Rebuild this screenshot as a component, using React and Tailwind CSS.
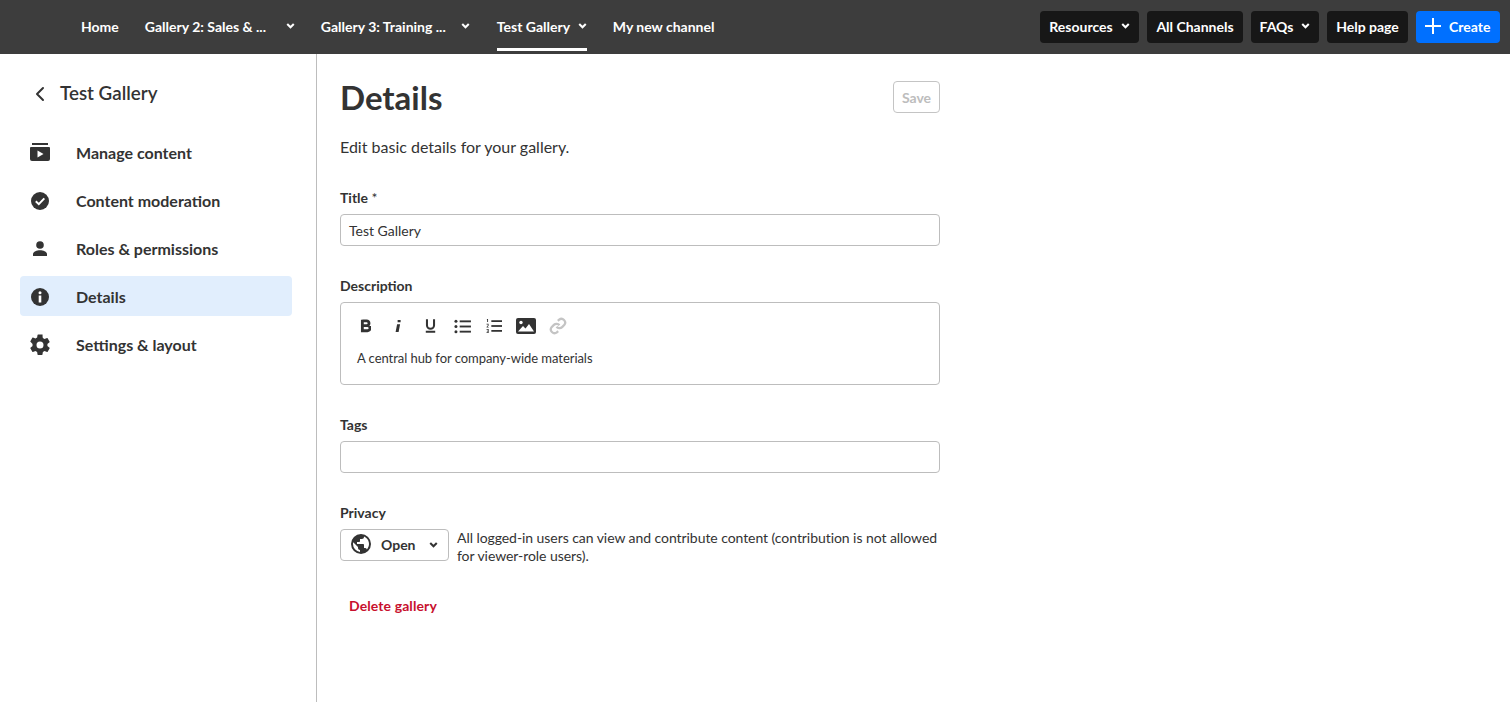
import React from 'react';
import { ChevronLeft } from 'lucide-react';

const Caret = ({ className = '' }) => (
  <svg viewBox="0 0 10 7" className={`w-[9px] h-[6px] ${className}`} fill="none" stroke="currentColor" strokeWidth="2.400">
    <path d="M1.200 1.200 5 5 8.800 1.200" />
  </svg>
);

const ContentIcon = () => (
  <svg viewBox="0 0 20 20" className="w-5 h-5" fill="#333">
    <rect x="2" y="0" width="16" height="2" />
    <path d="M1 4h18a1 1 0 0 1 1 1v11a2 2 0 0 1-2 2H2a2 2 0 0 1-2-2V5a1 1 0 0 1 1-1Z" />
    <path d="M7.500 7.500v7l6-3.500Z" fill="#fff" />
  </svg>
);
const CheckIcon = () => (
  <svg viewBox="0 0 20 20" className="w-5 h-5">
    <circle cx="10" cy="10" r="9" fill="#333" />
    <path d="M5.800 10.300 8.800 13.200 14.300 7.400" fill="none" stroke="#fff" strokeWidth="2" />
  </svg>
);
const PersonIcon = () => (
  <svg viewBox="0 0 20 20" className="w-5 h-5" fill="#333">
    <circle cx="10" cy="6" r="3.800" />
    <path d="M3 17v-2c0-2.400 4-3.800 7-3.800s7 1.400 7 3.800v2Z" />
  </svg>
);
const InfoIcon = () => (
  <svg viewBox="0 0 20 20" className="w-5 h-5">
    <circle cx="10" cy="10" r="9" fill="#333" />
    <circle cx="10" cy="5.800" r="1.500" fill="#fff" />
    <rect x="8.700" y="8.500" width="2.600" height="7" fill="#fff" />
  </svg>
);
const GearIcon = () => (
  <svg viewBox="0 0 24 24" className="w-6 h-6 shrink-0 -mx-[2px]" fill="#333">
    <path d="M19.400 13c.04-.33.06-.66.06-1s-.02-.67-.06-1l2.100-1.650a.5.500 0 0 0 .12-.64l-2-3.460a.5.500 0 0 0-.61-.22l-2.490 1a7.300 7.300 0 0 0-1.690-.98l-.38-2.650A.49.490 0 0 0 14 1.500h-4a.49.490 0 0 0-.49.420l-.38 2.650c-.61.250-1.170.590-1.690.98l-2.490-1a.5.500 0 0 0-.61.220l-2 3.460a.49.490 0 0 0 .12.640L4.560 11c-.04.330-.06.670-.06 1s.02.670.06 1l-2.100 1.650a.5.500 0 0 0-.12.640l2 3.460c.12.220.39.300.61.220l2.490-1c.52.400 1.080.730 1.690.980l.38 2.650c.03.240.24.420.49.420h4c.25 0 .46-.18.49-.42l.38-2.650c.61-.25 1.170-.59 1.690-.98l2.490 1c.23.090.49 0 .61-.22l2-3.460a.5.500 0 0 0-.12-.64ZM12 15.500a3.500 3.500 0 1 1 0-7 3.500 3.500 0 0 1 0 7Z" />
  </svg>
);

const GlobeIcon = () => (
  <svg viewBox="0 0 24 24" className="w-6 h-6 shrink-0" fill="#333">
    <path d="M12 2a10 10 0 1 0 0 20 10 10 0 0 0 0-20Zm-1 17.930A8 8 0 0 1 4 12c0-.62.08-1.210.21-1.790L9 15v1c0 1.100.9 2 2 2Zm6.900-2.540A2 2 0 0 0 16 16h-1v-3c0-.55-.45-1-1-1H8v-2h2c.55 0 1-.45 1-1V7h2c1.100 0 2-.9 2-2v-.41a8 8 0 0 1 2.900 12.800Z" />
  </svg>
);

const sideItems = [
  { label: 'Manage content', icon: <ContentIcon /> },
  { label: 'Content moderation', icon: <CheckIcon /> },
  { label: 'Roles & permissions', icon: <PersonIcon /> },
  { label: 'Details', icon: <InfoIcon />, active: true },
  { label: 'Settings & layout', icon: <GearIcon /> },
];

function Toolbar() {
  return (
    <div className="flex items-center h-[20px] text-[#333]">
      <svg viewBox="0 0 14 16" className="w-[11px] h-[14px] ml-[3px]" fill="none" stroke="#333" strokeWidth="3.600">
        <path d="M3 1.500h5.500a3 3 0 0 1 0 6H3m0 0h6.500a3.200 3.200 0 0 1 0 6.500H3V0" />
      </svg>
      <svg viewBox="0 0 8 16" className="w-[6px] h-[14px] ml-[24px]" fill="#333">
        <path d="M3.500 0h4v3H3.500ZM2.800 5.500h4L4.800 16H.8Z" />
      </svg>
      <svg viewBox="0 0 14 17" className="w-[11px] h-[16px] ml-[24px]" fill="none" stroke="#333" strokeWidth="2.600">
        <path d="M2.500 0v7.500a4.500 4.500 0 0 0 9 0V0M1 15.800h12" />
      </svg>
      <svg viewBox="0 0 18 16" className="w-[17px] h-[15px] ml-[18px]" fill="#333">
        <circle cx="2" cy="2.500" r="1.600" />
        <circle cx="2" cy="8" r="1.600" />
        <circle cx="2" cy="13.500" r="1.600" />
        <rect x="6" y="1.500" width="12" height="2" />
        <rect x="6" y="7" width="12" height="2" />
        <rect x="6" y="12.500" width="12" height="2" />
      </svg>
      <svg viewBox="0 0 18 16" className="w-[16px] h-[16px] ml-[15px]" fill="#333">
        <path d="M1 0h1.300v3.500H1.300V1H1ZM.6 5.500h2.300v2.200L1.700 9h1.300v.8H.6V9l1.400-1.500V6.300H.6ZM.6 11.500h2.400v4.300H.6V15h1.500v-.9H1v-.7h1.100v-1.100H.6Z" />
        <rect x="6" y="1.500" width="12" height="2" />
        <rect x="6" y="7" width="12" height="2" />
        <rect x="6" y="12.500" width="12" height="2" />
      </svg>
      <svg viewBox="0 0 20 16" className="w-[20px] h-[16px] ml-[14px]">
        <rect width="20" height="16" rx="2" fill="#333" />
        <circle cx="5" cy="4.500" r="1.700" fill="#fff" />
        <path d="M2 13.500 7 8l2.500 2.500L13 6l5 7.500Z" fill="#fff" />
      </svg>
      <svg viewBox="0 0 24 24" className="w-[18px] h-[18px] ml-[13px]" fill="none" stroke="#c4c4c4" strokeWidth="3">
        <path d="M10 13a5 5 0 0 0 7.500.5l3-3a5 5 0 0 0-7-7l-1.700 1.700" />
        <path d="M14 11a5 5 0 0 0-7.500-.5l-3 3a5 5 0 0 0 7 7l1.700-1.700" />
      </svg>
    </div>
  );
}

export default function App() {
  return (
    <div className="h-[702px] flex flex-col bg-white text-[#333] overflow-hidden font-['Lato','Liberation_Sans',sans-serif]">
      {/* Header */}
      <header className="h-[54px] shrink-0 bg-[#3d3d3d] flex items-center justify-between pl-[81px] pr-[10px] text-white text-[14px] font-bold">
        <nav className="flex items-center h-full gap-[26px]">
          <a className="h-[32px] pb-[2px] flex items-center">Home</a>
          <a className="h-[32px] pb-[2px] w-[150px] flex items-center justify-between">
            <span className="whitespace-nowrap">Gallery 2: Sales &amp; ...</span>
            <Caret />
          </a>
          <a className="h-[32px] pb-[2px] w-[150px] flex items-center justify-between">
            <span className="whitespace-nowrap">Gallery 3: Training ...</span>
            <Caret className="mr-[1px]" />
          </a>
          <a className="relative h-[32px] pb-[2px] w-[90px] flex items-center justify-between">
            <span>Test Gallery</span>
            <Caret />
            <span className="absolute left-0 right-0 top-[37px] h-[3px] bg-white" />
          </a>
          <a className="h-[32px] pb-[2px] flex items-center">My new channel</a>
        </nav>
        <div className="flex items-center gap-2">
          <button className="h-[32px] pb-[2px] w-[99px] rounded bg-[#171717] flex items-center justify-center gap-[8px]">
            Resources <Caret />
          </button>
          <button className="h-[32px] pb-[2px] w-[96px] rounded bg-[#171717]">All Channels</button>
          <button className="h-[32px] pb-[2px] w-[68px] rounded bg-[#171717] flex items-center justify-center gap-[8px]">
            FAQs <Caret />
          </button>
          <button className="h-[32px] pb-[2px] w-[81px] rounded bg-[#171717]">Help page</button>
          <button className="h-[32px] pb-[2px] w-[84px] rounded bg-[#0070ff] flex items-center pl-[9px] gap-[8px]">
            <svg viewBox="0 0 16 16" className="w-4 h-4" fill="#fff">
              <rect x="7" y="0" width="2" height="16" />
              <rect x="0" y="7" width="16" height="2" />
            </svg>
            Create
          </button>
        </div>
      </header>

      <div className="flex flex-1 min-h-0">
        {/* Sidebar */}
        <aside className="w-[317px] shrink-0 border-r border-[#bdbdbd] pl-[20px] pr-[24px]">
          <div className="h-[31px] mt-[24px] flex items-center text-[18.800px] font-semibold">
            <ChevronLeft className="w-[24px] h-[24px] ml-[8px] mr-[8px]" strokeWidth={2} />
            <span>Test Gallery</span>
          </div>
          <div className="mt-[23px] flex flex-col gap-2">
            {sideItems.map((item) => (
              <a
                key={item.label}
                className={`h-[40px] pt-[2px] rounded flex items-center text-[16px] font-bold ${item.active ? 'bg-[#e1eefd]' : ''}`}
              >
                <span className="w-[20px] ml-[10px] mr-[26px] flex justify-center">{item.icon}</span>
                {item.label}
              </a>
            ))}
          </div>
        </aside>

        {/* Main */}
        <main className="pl-[23px] w-[623px]">
          <div className="flex items-center justify-between mt-[27px] h-[32px]">
            <h1 className="text-[33px] leading-[32px] font-bold">Details</h1>
            <button className="w-[47px] h-[32px] pt-[1px] border border-[#c4c4c4] rounded text-[#bdbdbd] text-[14px] font-bold">Save</button>
          </div>
          <p className="mt-[24px] text-[16px] leading-[20px]">Edit basic details for your gallery.</p>

          <label className="block mt-[32px] text-[14px] leading-[18px] font-bold">Title <span className="font-normal">*</span></label>
          <div className="mt-[7px] h-[32px] border border-[#bdbdbd] rounded flex items-center px-2 text-[14px]">Test Gallery</div>

          <label className="block mt-[31px] text-[14px] leading-[18px] font-bold">Description</label>
          <div className="mt-[7px] h-[83px] border border-[#bdbdbd] rounded pt-[13px] pl-[16px]">
            <Toolbar />
            <p className="mt-[13px] text-[13px] leading-[18px] tracking-[-0.05px]">A central hub for company-wide materials</p>
          </div>

          <label className="block mt-[31px] text-[14px] leading-[18px] font-bold">Tags</label>
          <div className="mt-[7px] h-[32px] border border-[#bdbdbd] rounded" />

          <label className="block mt-[31px] text-[14px] leading-[18px] font-bold">Privacy</label>
          <div className="mt-[7px] flex items-start">
            <button className="w-[109px] h-[32px] pb-[2px] shrink-0 border border-[#bdbdbd] rounded flex items-center pl-[8px] text-[14px] font-bold">
              <GlobeIcon />
              <span className="ml-[8px]">Open</span>
              <Caret className="ml-[13px] mt-[2px]" />
            </button>
            <p className="ml-[8px] text-[14px] leading-[18px] tracking-[-0.06px]">
              All logged-in users can view and contribute content (contribution is not allowed for viewer-role users).
            </p>
          </div>

          <button className="mt-[31px] ml-[9px] text-[14px] leading-[20px] font-bold tracking-[0.1px] text-[#c8102e]">Delete gallery</button>
        </main>
      </div>
    </div>
  );
}
